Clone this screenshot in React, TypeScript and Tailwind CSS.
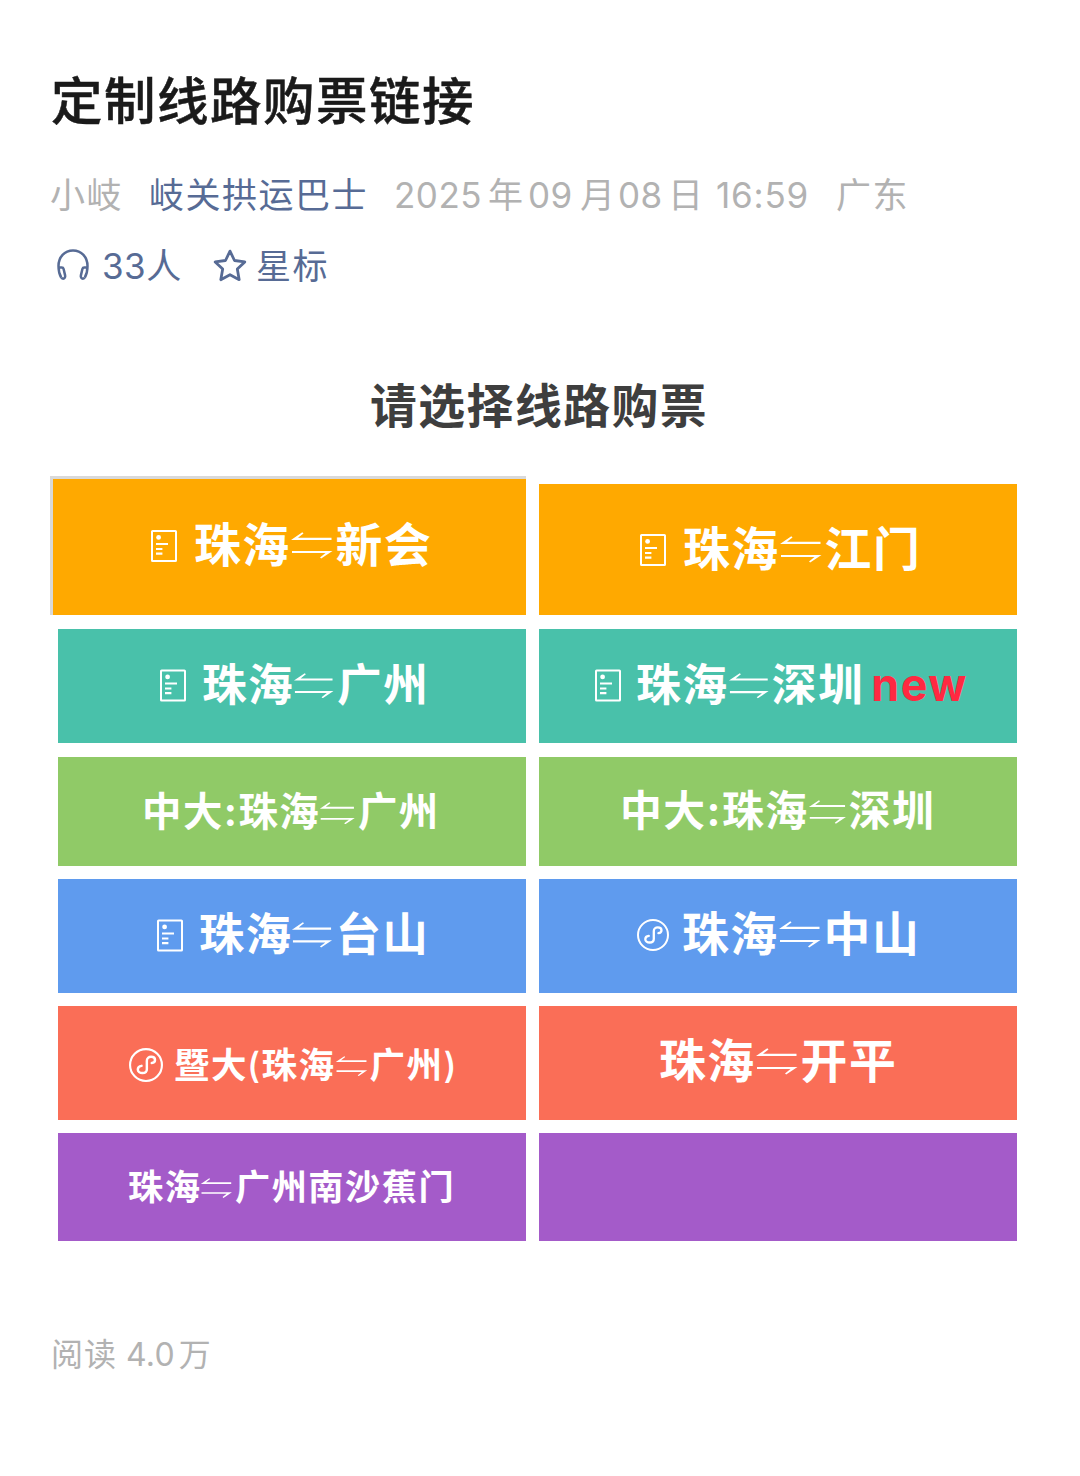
import type { ReactNode } from "react";

function Notice({ className = "" }: { className?: string }) {
  return (
    <svg viewBox="0 0 26 32" fill="none" stroke="currentColor" className={`shrink-0 ${className}`}>
      <rect x="1" y="1" width="24" height="30" rx="0.6" strokeWidth="2" />
      <circle cx="7.6" cy="7.4" r="2.4" fill="currentColor" stroke="none" />
      <path d="M5 14H17M5 19H11.4M5 23.6H11.4" strokeWidth="2.2" />
    </svg>
  );
}

function MiniProgram({ className = "" }: { className?: string }) {
  return (
    <svg viewBox="0 0 32 32" fill="none" stroke="currentColor" strokeLinecap="round" className={`shrink-0 ${className}`}>
      <circle cx="16" cy="16" r="15" strokeWidth="2" />
      <path d="M21.4 14.2c1.900-.2 3.100-1.300 3.100-2.900 0-1.700-1.500-3-3.700-3s-4 1.400-4 3.600v8c0 2.200-1.800 3.600-4.200 3.600s-4.300-1.400-4.300-3.300 1.500-3.200 3.500-3.400" strokeWidth="2.3" />
    </svg>
  );
}

// Paired harpoons between the two stops, scaled with the label
function Swap() {
  return (
    <svg viewBox="0 0 46 27" fill="currentColor" role="img" aria-label="⇋" className="-ml-px mt-[0.21em] h-[0.577em] w-[0.983em] shrink-0">
      <path d="M1 7.900 12.300.300l1.200 1.100L8 5.700H41.500V7.900z" />
      <path d="M42.500 18.900 31.200 26.500l-1.200-1.100L35.500 21.100H2V18.900z" />
    </svg>
  );
}

function Cell({ className, children }: { className: string; children?: ReactNode }) {
  return <a className={`flex items-start whitespace-nowrap font-bold leading-none tracking-[1.5px] text-white ${className}`}>{children}</a>;
}

export default function App() {
  return (
    <main className="h-[1476px] w-[1080px] overflow-hidden bg-white pl-[51px] font-['Inter','Noto_Sans_CJK_SC',sans-serif]">
      <h1 className="pt-[76px] text-[51.5px] font-medium leading-none tracking-[1.5px] text-[#1a1a1a] [-webkit-text-stroke:0.5px_#1a1a1a]">定制线路购票链接</h1>

      {/* Byline */}
      <div className="mt-[50px] flex whitespace-nowrap text-[35px] leading-none tracking-[1.5px] text-[#b2b2b2]">
        <span className="-ml-px w-[99px]">小岐</span>
        <span className="w-[245px] text-[#576b95]">岐关拱运巴士</span>
        <span className="w-[94px] tracking-[0.5px]">2025</span>
        <span className="w-[40px]">年</span>
        <span className="w-[52px] tracking-[0.5px]">09</span>
        <span className="w-[38px]">月</span>
        <span className="w-[50px] tracking-[0.5px]">08</span>
        <span className="w-[48px]">日</span>
        <span className="w-[120px] tracking-[0.8px]">16:59</span>
        <span>广东</span>
      </div>
      <div className="mt-[36px] flex whitespace-nowrap text-[35px] leading-none tracking-[1.5px] text-[#576b95]">
        <svg viewBox="0 0 32 32" fill="none" stroke="currentColor" strokeWidth="2.5" strokeLinejoin="round" className="ml-[6px] mr-[13px] h-[32px] w-[32px]">
          <path d="M4.200 28.500C2.300 25.300 1.500 21.500 1.500 17 1.500 8 7.600 1.500 16 1.500S30.500 8 30.500 17c0 4.500-.8 8.300-2.700 11.500" />
          <path d="M2 18.400h2.700c1 0 1.700.6 1.900 1.500l1.500 6.500c.4 1.800-.5 3.300-2 3.300-1 0-1.600-.5-1.900-1.300M30 18.400h-2.700c-1 0-1.700.6-1.900 1.500l-1.500 6.500c-.4 1.800.5 3.300 2 3.300 1 0 1.600-.5 1.900-1.300" />
        </svg>
        <span className="w-[110px]"><span className="tracking-[0.5px]">33</span>人</span>
        <svg viewBox="0 0 34 32" fill="none" stroke="currentColor" strokeWidth="2.8" strokeLinejoin="round" className="ml-px mr-[9px] h-[33px] w-[34px]">
          <path d="M17 1.600l4.500 9.400 10.300 1.400-7.500 7.200 1.900 10.600L17 25.200 7.800 30.200l1.900-10.600-7.500-7.200L12.500 11z" />
        </svg>
        <span>星标</span>
      </div>

      <h2 className="mt-[99px] pl-[319px] text-[46.8px] font-bold leading-none tracking-[1.5px] text-[#3e3e3e]">请选择线路购票</h2>

      {/* Routes */}
      <section className="-ml-px mt-[47px] w-[967px]">
        <div className="flex h-[139px] items-end justify-between">
          <Cell className="h-[139px] w-[476px] border-l-[3px] border-t-[3px] border-[#d9d9d9] bg-[#ffa900] pl-[98px] pt-[43px] text-[46.8px]">
            <Notice className="mr-[17px] mt-[8px] h-[32px] w-[26px]" />
            珠海<Swap />新会
          </Cell>
          <Cell className="h-[131px] w-[478px] bg-[#ffa900] pl-[101px] pt-[42px] text-[46.8px]">
            <Notice className="mr-[17px] mt-[8px] h-[32px] w-[26px]" />
            珠海<Swap />江门
          </Cell>
        </div>
        <div className="mt-[14px] flex h-[114px] justify-between pl-[8px]">
          <Cell className="w-[468px] bg-[#49c1aa] pl-[102px] pt-[34px] text-[44.6px]">
            <Notice className="mr-[16px] mt-[6px] h-[33px] w-[26px]" />
            珠海<Swap />广州
          </Cell>
          <Cell className="w-[478px] bg-[#49c1aa] pl-[56px] pt-[34px] text-[44.8px]">
            <Notice className="mr-[15px] mt-[6px] h-[33px] w-[26px]" />
            珠海<Swap />深圳<span className="ml-[7px] text-[#ff2941]">new</span>
          </Cell>
        </div>
        <div className="mt-[14px] flex h-[109px] justify-between pl-[8px]">
          <Cell className="w-[468px] bg-[#90ca67] pl-[84px] pt-[36px] text-[39.4px]">
            中大:珠海<Swap />广州
          </Cell>
          <Cell className="w-[478px] bg-[#90ca67] pl-[81px] pt-[34px] text-[41.8px]">
            中大:珠海<Swap />深圳
          </Cell>
        </div>
        <div className="mt-[13px] flex h-[114px] justify-between pl-[8px]">
          <Cell className="w-[468px] bg-[#5f9bee] pl-[99px] pt-[33px] text-[45.2px]">
            <Notice className="mr-[16px] mt-[7px] h-[33px] w-[26px]" />
            珠海<Swap />台山
          </Cell>
          <Cell className="w-[478px] bg-[#5f9bee] pl-[98px] pt-[32px] text-[46.8px]">
            <MiniProgram className="mr-[13px] mt-[8px] h-[32px] w-[32px]" />
            珠海<Swap />中山
          </Cell>
        </div>
        <div className="mt-[13px] flex h-[114px] justify-between pl-[8px]">
          <Cell className="w-[468px] bg-[#fa6e57] pl-[71px] pt-[42px] text-[35.5px]">
            <MiniProgram className="mr-[11px] h-[34px] w-[34px]" />
            暨大<span className="-ml-px font-medium">(</span>珠海<Swap />广州<span className="font-medium">)</span>
          </Cell>
          <Cell className="w-[478px] bg-[#fa6e57] pl-[120px] pt-[32px] text-[46.8px]">
            珠海<Swap />开平
          </Cell>
        </div>
        <div className="mt-[13px] flex h-[108px] justify-between pl-[8px]">
          <Cell className="w-[468px] bg-[#a45bc9] pl-[70px] pt-[37px] text-[35.2px]">
            珠海<Swap />广州南沙蕉门
          </Cell>
          <Cell className="w-[478px] bg-[#a45bc9]" />
        </div>
      </section>

      <footer className="mt-[98px] text-[32px] leading-none tracking-[1px] text-[#b2b2b2]">
        阅读<span className="ml-[9px] mr-[4px] tracking-[0.2px]">4.0</span>万
      </footer>
    </main>
  );
}
